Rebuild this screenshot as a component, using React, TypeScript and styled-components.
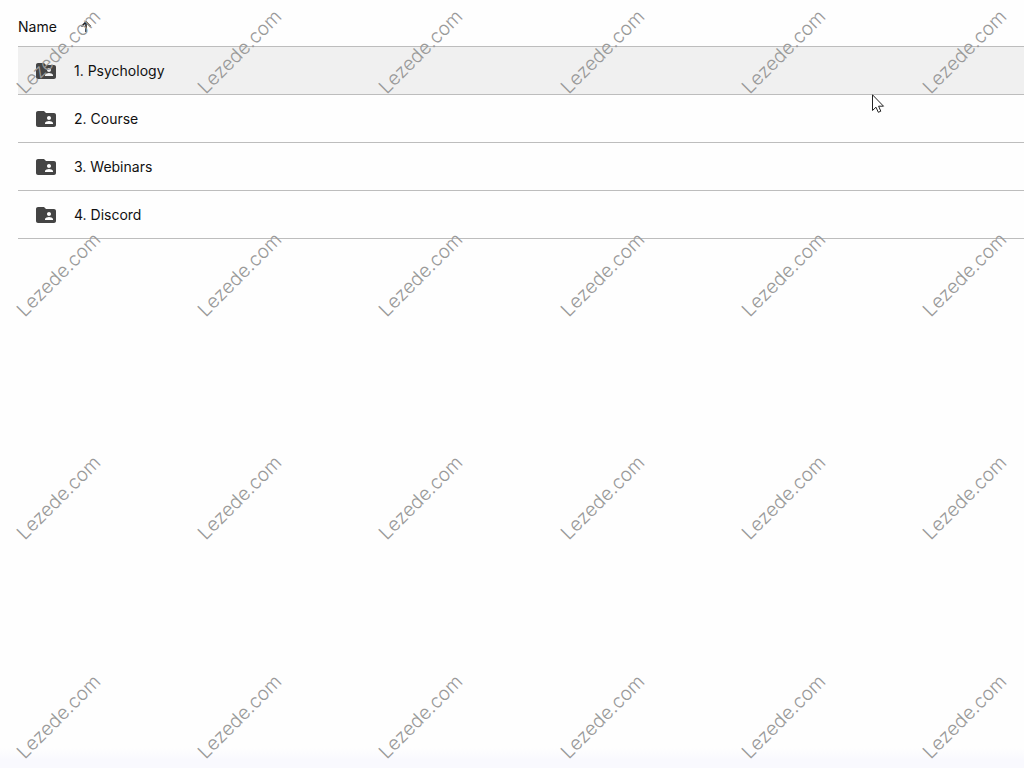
import React from "react";
import styled, { createGlobalStyle } from "styled-components";

const GlobalStyle = createGlobalStyle`
  * { box-sizing: border-box; }
  body {
    margin: 0;
    background: #fefefe;
    color: #111;
    font-family: Inter, Roboto, "Liberation Sans", sans-serif;
    font-size: 14px;
    line-height: 20px;
  }
`;

const Page = styled.div`
  position: relative;
  display: flex;
  flex-direction: column;
  justify-content: space-between;
  min-height: 100vh;
  overflow: hidden;
`;

const FileTable = styled.table`
  width: 100%;
  border-collapse: separate;
  border-spacing: 0;
`;

const Main = styled.main`
  padding-left: 18px;
`;

const HeaderCell = styled.th`
  height: 47px;
  padding: 7px 0 0;
  border-bottom: 1px solid #bdbdbd;
  text-align: left;
  font-weight: 400;
`;

const SortButton = styled.button`
  display: flex;
  align-items: center;
  gap: 21px;
  padding: 0;
  border: 0;
  background: none;
  color: inherit;
  font: inherit;
  cursor: pointer;
`;

const FileCell = styled.td<{ $hovered?: boolean }>`
  height: 48px;
  padding: 0 16px;
  border-bottom: 1px solid #bdbdbd;
  background: ${(p) => (p.$hovered ? "#f0f0f0" : "transparent")};
`;

const FileLink = styled.a`
  display: flex;
  align-items: center;
  gap: 16px;
  color: inherit;
  font-weight: 400;
  text-decoration: none;
`;

const BottomStrip = styled.div`
  height: 20px;
  background: linear-gradient(#fefefe, #f9f9fe 60%);
`;

const Watermarks = styled.div`
  position: absolute;
  inset: 0;
  display: grid;
  grid-template-columns: repeat(6, 82px);
  grid-template-rows: 223px 223px 219px 82px;
  justify-content: space-between;
  padding: 11px 18px 0;
  overflow: hidden;
  pointer-events: none;
`;

const Mark = styled.span`
  display: flex;
  align-items: center;
  justify-content: center;
  width: 82px;
  height: 82px;
  color: #999;
  font-family: Inter, "Noto Sans", sans-serif;
  font-size: 19px;
  font-weight: 300;
  line-height: 22px;
  white-space: nowrap;
  transform: rotate(-45deg);
`;

const Pointer = styled.svg`
  position: absolute;
  top: 94px;
  left: 872px;
  pointer-events: none;
`;

const SharedFolderIcon = () => (
  <svg width="24" height="24" viewBox="0 0 24 24" aria-hidden="true">
    <path
      fill="#444"
      fillRule="evenodd"
      d="M20 6h-8l-2-2H4c-1.100 0-1.990.9-1.990 2L2 18c0 1.100.9 2 2 2h16c1.100 0 2-.9 2-2V8c0-1.100-.9-2-2-2zm-5 3c1.100 0 2 .9 2 2s-.9 2-2 2-2-.9-2-2 .9-2 2-2zm4 8h-8v-1c0-1.330 2.670-2 4-2s4 .67 4 2v1z"
    />
  </svg>
);

const SortArrowIcon = () => (
  <svg width="16" height="16" viewBox="0 0 16 16" fill="none" stroke="#1f1f1f" strokeWidth="1.600" aria-hidden="true">
    <path d="M8 13V3M3.500 7.500L8 3l4.500 4.500" />
  </svg>
);

const folders = ["1. Psychology", "2. Course", "3. Webinars", "4. Discord"];
const marks = Array.from({ length: 24 }, (_, i) => i);

export default function App() {
  return (
    <Page>
      <GlobalStyle />
      <Main>
        <FileTable>
          <thead>
            <tr>
              <HeaderCell scope="col" aria-sort="ascending">
                <SortButton type="button">
                  Name
                  <SortArrowIcon />
                </SortButton>
              </HeaderCell>
            </tr>
          </thead>
          <tbody>
            {folders.map((name, i) => (
              <tr key={name}>
                <FileCell $hovered={i === 0}>
                  <FileLink href="#">
                    <SharedFolderIcon />
                    {name}
                  </FileLink>
                </FileCell>
              </tr>
            ))}
          </tbody>
        </FileTable>
      </Main>
      <BottomStrip />
      <Watermarks>
        {marks.map((i) => (
          <Mark key={i}>Lezede.com</Mark>
        ))}
      </Watermarks>
      <Pointer width="13" height="20" viewBox="0 0 13 20" aria-hidden="true">
        <path
          d="M.5 .8V16.500L4 13.200L6.300 18.300L8.800 17.200L6.600 12.200H11.500Z"
          fill="#fff"
          stroke="#222"
        />
      </Pointer>
    </Page>
  );
}
